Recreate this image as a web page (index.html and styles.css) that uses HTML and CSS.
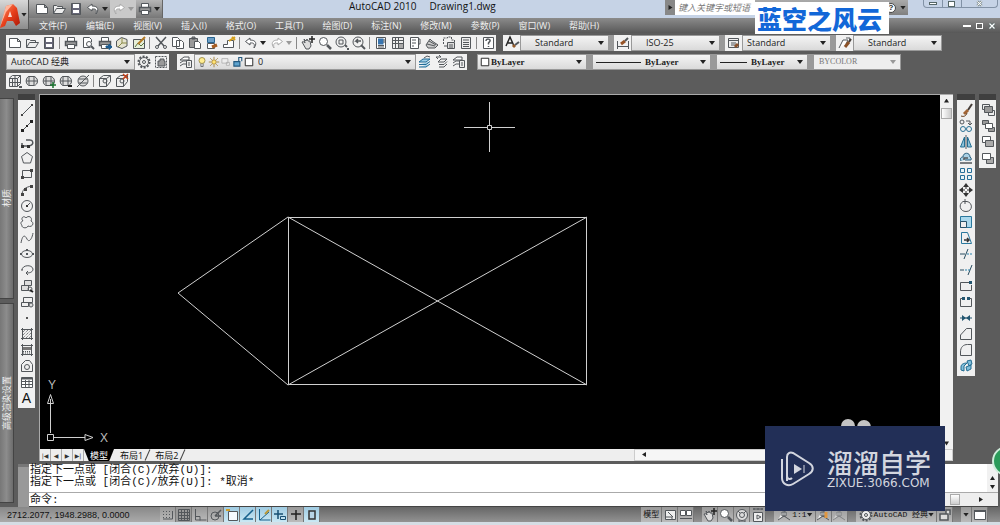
FILE: index.html
```
<!DOCTYPE html>
<html lang="zh-CN">
<head>
<meta charset="utf-8">
<title>AutoCAD 2010 - Drawing1.dwg</title>
<link rel="stylesheet" href="styles.css">
</head>
<body>
<svg class="sprite" aria-hidden="true">
  <defs>
    <linearGradient id="red" x2="1" y2="1"><stop stop-color="#ff9a70"/><stop offset=".5" stop-color="#e8401c"/><stop offset="1" stop-color="#a81505"/></linearGradient>
    <symbol id="new" viewBox="0 0 16 16"><path fill="#fff" d="M2.500 3.500h8l3 3v6h-11zM10.500 3.500v3h3"/></symbol>
    <symbol id="open" viewBox="0 0 16 16"><path fill="#eee" d="M2.500 12.500v-8h3l1 1h5v2M2.500 12.500l3-5h9l-3 5z"/></symbol>
    <symbol id="save" viewBox="0 0 16 16"><path fill="#667" d="M3.500 2.500h9v11h-9z"/><path fill="#fff" stroke="none" d="M5 3h6v4H5zM5 9h6v3H5z"/></symbol>
    <symbol id="undo" viewBox="0 0 16 16"><path fill="#fff" d="M7 3 2.500 6.500 7 10V8c4-.5 5 1 4 5 3-4 2.500-8-4-8z"/></symbol>
    <symbol id="redo" viewBox="0 0 16 16"><path fill="#fff" stroke="#aaa" d="M9 3l4.500 3.500L9 10V8C5 7.500 4 9 5 13 2 9 2.500 5 9 5z"/></symbol>
    <symbol id="print" viewBox="0 0 16 16"><path fill="#fff" d="M4.500 6V2.500h7V6"/><path fill="#999" stroke-width="1.500" d="M2.500 6.500h11v4h-11z"/><path fill="#fff" d="M4.500 9.500h7v4h-7z"/></symbol>
    <symbol id="preview" viewBox="0 0 16 16"><path fill="#fff" d="M10.500 12.500h-7v-10h6l2 2V7"/><circle cx="9" cy="9" r="2.500" fill="#fff"/><path stroke-width="2" d="m11 11 3 3"/></symbol>
    <symbol id="publish" viewBox="0 0 16 16"><use href="#print"/><path stroke="#1d5c8f" fill="#1d5c8f" d="M9 11h3V9l3 3-3 2.500v-2H9z"/></symbol>
    <symbol id="dwf" viewBox="0 0 16 16"><path fill="#e6e4d0" d="m2.500 6 5-3.500 5.500 2v6.500l-5 2.500-5.500-2z"/><path stroke="#8b8b49" d="M8 3v5h5M8 8l-4 4"/></symbol>
    <symbol id="markup" viewBox="0 0 16 16"><path fill="#e7efd9" d="M2.500 4.500h11v9h-11z"/><path stroke="#58733d" d="m4 12 3-4 3 3 3-3"/><path stroke="#b37a25" stroke-width="2" d="m7 9 7-7"/></symbol>
    <symbol id="cut" viewBox="0 0 16 16"><path stroke-width="1.500" d="m3 2 8 9M13 2l-8 9"/><circle cx="4" cy="12" r="1.500"/><circle cx="12" cy="12" r="1.500"/></symbol>
    <symbol id="copyclip" viewBox="0 0 16 16"><path fill="#fff" d="M2.500 2.500h5l2 2v7h-7zM6.500 5.500h5l2 2v6h-7z"/></symbol>
    <symbol id="paste" viewBox="0 0 16 16"><path fill="#999" d="M2.500 3.500h8v9h-8zM5 2h3v2H5z"/><path fill="#fff" d="M7.500 6.500h4l2 2v5h-6z"/></symbol>
    <symbol id="match" viewBox="0 0 16 16"><path stroke="#28638f" fill="#6da0c7" d="M3.500 2.500h7v5h-7z"/><path fill="#fff" d="M3.500 8.500h7v5h-7z"/><path stroke="#a85d20" stroke-width="3" d="m8 12 5-2"/></symbol>
    <symbol id="blockedit" viewBox="0 0 16 16"><path fill="#fff" d="M2.500 9.500h4v-4h6v7h-10z"/><path stroke="#d4a01c" stroke-width="2" d="m8 6 6-4M11 2l3 3"/></symbol>
    <symbol id="pan" viewBox="0 0 16 16"><path fill="#ddd" d="M2 7c2-1 3 1 3 1l-1-4 2 2 1-2 1 2 2 0 1 5-2 3H6z"/><path stroke="#222" stroke-width="1.500" d="M12 1v7M9 4h6"/></symbol>
    <symbol id="zoom" viewBox="0 0 16 16"><circle cx="6.500" cy="6.500" r="4" fill="#fff"/><path stroke-width="2.500" d="m10 10 4 4"/></symbol>
    <symbol id="zoomwin" viewBox="0 0 16 16"><circle cx="7" cy="7" r="5"/><path d="M5 5h4v4H5z"/><path stroke-width="2" d="m11 10 2 2M13 14h2"/></symbol>
    <symbol id="zoomprev" viewBox="0 0 16 16"><circle cx="7" cy="7" r="5"/><path stroke-width="2" d="m10 10 4 4"/><path stroke-width="1.500" d="M10 6H5l2-2M5 6l2 2"/></symbol>
    <symbol id="props" viewBox="0 0 16 16"><path fill="#fff" d="M3.500 2.500h9v11h-9z"/><path stroke="#3874ae" stroke-width="3" d="M5 5h4v3H5"/><path d="M5 10.500h6M5 12h6M11 4v4"/></symbol>
    <symbol id="center" viewBox="0 0 16 16"><path fill="#eee" d="M2.500 2.500h11v11h-11zM5.500 3v10M8.500 3v6M3 5.500h10M3 8.500h5"/><path fill="#aaa" d="M8.500 8.500h5v5h-5z"/></symbol>
    <symbol id="palette" viewBox="0 0 16 16"><path fill="#fff" d="M3.500 2.500h8v11h-8zM11 4h2v5h-2M5 5h4M5 8h4M5 11h2"/></symbol>
    <symbol id="sheet" viewBox="0 0 16 16"><path fill="#ccc" d="m2 10 4-6 2 2 6 4-3 3H4zM3 9l8 2M5 6l7 4"/></symbol>
    <symbol id="markset" viewBox="0 0 16 16"><path stroke-dasharray="2 1" d="M2.500 9V3h4V2h4v3h3v4"/><path fill="#ddd" d="M6.500 7.500h7v6h-7zM8 10h4M8 12h4M3 11h3"/></symbol>
    <symbol id="calc" viewBox="0 0 16 16"><path fill="#eee" d="M3.500 2.500h9v11h-9zM5 5h6M5 7.500h6M5 9.500h6M5 11.500h6"/></symbol>
    <symbol id="help" viewBox="0 0 16 16"><path fill="#fff" d="M3.500 2.500h10v11h-10z"/><path stroke-width="1.500" d="M6 6c0-3 5-2 4 0L8.500 8v1.500M8.500 11v1"/></symbol>
    <symbol id="brush" viewBox="0 0 16 16"><path stroke="#a26434" stroke-width="3" d="m6 12 4-4"/><path stroke="#443c38" stroke-width="2" d="m10 8 4-6"/><path stroke="#684020" d="M3 14c3 1 5 0 6-3"/></symbol>
    <symbol id="mleader" viewBox="0 0 16 16"><path fill="#fff" d="m2 13 4-8h5l-2 4M9 3h4l-1 4"/><path stroke="#8a5128" stroke-width="3" d="m8 12 4-5"/><path stroke="#443c38" stroke-width="2" d="m12 7 2-3"/></symbol>
    <symbol id="textstyle" viewBox="0 0 16 16"><path stroke="#222" stroke-width="1.500" d="m2 11 4-9 4 9M4 8h4"/><path stroke="#945a28" stroke-width="3" d="m9 12 2-2"/><path stroke-width="2" d="m11 10 4-3"/></symbol>
    <symbol id="dimstyle" viewBox="0 0 16 16"><path d="M2.500 6v8M13.500 6v8M3 11.500h10"/><path stroke="#975326" stroke-width="3" d="m6 9 4-3"/><path stroke-width="2" d="m10 6 3-3"/></symbol>
    <symbol id="tablestyle" viewBox="0 0 16 16"><path fill="#eee" d="M2.500 3.500h10v9h-10zM3 5.500h9M5 8h5M5 10h5"/><path stroke="#89512b" stroke-width="3" d="m9 12 3-3"/></symbol>
    <symbol id="gear" viewBox="0 0 16 16"><circle cx="8" cy="8" r="5.500" stroke-width="2" stroke-dasharray="2 1.400"/><circle cx="8" cy="8" r="4.500" fill="#eee"/><circle cx="8" cy="8" r="1.500"/></symbol>
    <symbol id="wssave" viewBox="0 0 16 16"><path stroke-dasharray="2 1" d="M2.500 2.500h11v11h-11z"/><path fill="#999" d="M5 7h2V5h4v2h1v5H5z"/></symbol>
    <symbol id="layers" viewBox="0 0 16 16"><path fill="#fff" d="m2 6 4-3h5v3H5zM2 9l3-2h5M2 12l3-2h3"/><path fill="#eee" d="M8.500 6.500h5v7h-5zM10 9h2M10 11h2"/></symbol>
    <symbol id="laycur" viewBox="0 0 16 16"><path stroke="#216b96" fill="#9fcfe8" d="m2 8 4-3h7l-4 3zM2 10.500h7l4-3M2 13h7l4-3"/><path d="m7 4 3-2 3 1"/></symbol>
    <symbol id="layprev" viewBox="0 0 16 16"><path d="m4 8 3-3h6l-3 3zM5 10.500h5l3-3M5 13h5l3-3M2 3h5L5 1M2 3l2 2"/></symbol>
    <symbol id="bulb" viewBox="0 0 16 16"><circle cx="8" cy="6" r="4" fill="#ffed91" stroke="#8b7933"/><path d="M6.500 10v4h3v-4"/></symbol>
    <symbol id="sun" viewBox="0 0 16 16"><circle cx="8" cy="8" r="3" fill="#ffe475" stroke="#97701f"/><path stroke="#97701f" d="M8 1v3M8 12v3M1 8h3M12 8h3M3 3l2 2M11 11l2 2M13 3l-2 2M5 11l-2 2"/></symbol>
    <symbol id="vp" viewBox="0 0 16 16"><path stroke="#aaa" fill="#eee" d="M2.500 3.500h8v6h-8zM8.500 8.500h4v4h-4z"/></symbol>
    <symbol id="lock" viewBox="0 0 16 16"><path stroke="#245a80" fill="#5fa4cf" stroke-width="1.500" d="M2.500 7.500h8v6h-8z"/><path stroke="#245a80" stroke-width="1.500" d="M9 7V2h4v5"/></symbol>
    <symbol id="box" viewBox="0 0 16 16"><path fill="#fff" stroke="#222" stroke-width="1.500" d="M2 2h12v12H2z"/></symbol>
    <symbol id="meshbox" viewBox="0 0 16 16"><path d="m2.500 5 3-2.500h8v8l-3 3h-8zM2.500 5.500h8v8M10.500 5.500l3-3M5.500 5v8M8 3v10M3 9.500h10"/><path stroke-width="2" d="M12 14h3"/></symbol>
    <symbol id="mesh" viewBox="0 0 16 16"><path fill="#ddd" d="M4.500 3.500h6c5 3 3 8 0 9h-6c-4-3-2-8 0-9zM2 8h12M5 3v9M10 3v9"/></symbol>
    <symbol id="meshadd" viewBox="0 0 16 16"><use href="#mesh"/><path stroke="#17702d" stroke-width="1.500" d="M12 9v6M9 12h6"/></symbol>
    <symbol id="meshsub" viewBox="0 0 16 16"><use href="#mesh"/><path stroke="#222" stroke-width="2" d="M10 13h4"/></symbol>
    <symbol id="meshno" viewBox="0 0 16 16"><circle cx="8" cy="8" r="5" fill="#ddd"/><path d="M2 14 14 2M4 6h8M4 10h8"/></symbol>
    <symbol id="cube" viewBox="0 0 16 16"><path fill="#eee" d="m2.500 5.500 4-3h7v6l-4 5h-7zM2.500 5.500h7v8M9.500 5.500l4-3"/><circle cx="8" cy="8" r="2"/></symbol>
    <symbol id="cubex" viewBox="0 0 16 16"><use href="#cube"/><path stroke="#c2401a" stroke-width="1.500" d="m9 1 5 5M14 1 9 6"/></symbol>
    <symbol id="line" viewBox="0 0 16 16"><path d="m3 13 10-10"/><path fill="#444" stroke="none" d="M2 12h2v2H2zM12 2h2v2h-2z"/></symbol>
    <symbol id="xline" viewBox="0 0 16 16"><path d="m2 14 12-12"/><path fill="#222" stroke="none" d="M2 11h3v3H2zM7 7h2v2H7zM11 2h3v3h-3z"/></symbol>
    <symbol id="pline" viewBox="0 0 16 16"><path stroke-width="1.500" d="M3 12h7c6-1 4-7 0-6H7M3 12V9"/><path fill="#333" stroke="none" d="M2 11h3v3H2zM8 11h3v3H8z"/></symbol>
    <symbol id="polygon" viewBox="0 0 16 16"><path d="m8 2.500 5.500 4-2 6.500h-7l-2-6.500z"/></symbol>
    <symbol id="rect" viewBox="0 0 16 16"><path d="M3.500 4.500h9v7h-9z"/><path fill="#444" stroke="none" d="M2 10h3v3H2zM11 3h3v3h-3z"/></symbol>
    <symbol id="arc" viewBox="0 0 16 16"><path d="M3 13c0-5 3-8 10-9"/><path fill="#444" stroke="none" d="M2 11h3v3H2zM11 3h3v3h-3zM5 6h3v3H5z"/></symbol>
    <symbol id="circle" viewBox="0 0 16 16"><circle cx="8" cy="8" r="5.500"/><path d="m8 8 3-3"/><path fill="#333" stroke="none" d="M7 7h2v2H7z"/></symbol>
    <symbol id="cloud" viewBox="0 0 16 16"><path d="M4 7C1 4 5 1 7 4c2-3 7-1 5 3 4 2 1 7-3 5-1 3-7 2-6-1-2-1-1-4 1-4z"/></symbol>
    <symbol id="spline" viewBox="0 0 16 16"><path d="M2 13C4 2 7 7 8 9c2 4 5 0 6-6"/></symbol>
    <symbol id="ellipse" viewBox="0 0 16 16"><ellipse cx="8" cy="8" rx="5.500" ry="3.500"/><path stroke-width="2" d="M1 8h2M13 8h2M7 8h2M7 4h2"/></symbol>
    <symbol id="earc" viewBox="0 0 16 16"><path d="M3 8c0-5 10-6 11-1 0 3-3 4-6 4M3 7v2M9 9l-2 2 2 2"/></symbol>
    <symbol id="insert" viewBox="0 0 16 16"><path fill="#ddd" d="M5.500 2.500h7v5h-7zM2.500 7.500h7v5h-7z"/><circle cx="11" cy="11" r="2"/><path stroke="#222" stroke-width="2" d="m11 12 3 2"/></symbol>
    <symbol id="block" viewBox="0 0 16 16"><path d="M4.500 3.500h9v5h-9zM2.500 8.500h7v4h-7z"/><circle cx="12" cy="11" r="2" fill="#ddd"/></symbol>
    <symbol id="point" viewBox="0 0 16 16"><path fill="#555" stroke="none" d="M7 7h2v2H7z"/></symbol>
    <symbol id="hatch" viewBox="0 0 16 16"><path d="M3.500 2v12M12.500 2v12M2 3.500h12M2 12.500h12"/><path stroke-dasharray="1 1" d="m4 6 2-2M4 9l5-5M4 12l8-8M7 12l5-5M10 12l2-2"/></symbol>
    <symbol id="grad" viewBox="0 0 16 16"><path d="M3.500 2v12M12.500 2v12M2 3.500h12M2 12.500h12"/><path fill="#777" stroke="none" d="M4 5h8v3H4z"/><path stroke-dasharray="1 1" d="M4 9.500h8M4 11h8"/></symbol>
    <symbol id="region" viewBox="0 0 16 16"><path d="M2.500 13.500v-7l4-4h4l3 4v7z"/><circle cx="8" cy="9" r="2.500"/></symbol>
    <symbol id="table" viewBox="0 0 16 16"><path fill="#fff" d="M2.500 3.500h11v10h-11zM3 7.500h10M3 10.500h10M6.500 6v7M10 6v7"/><path stroke-width="2" d="M3 4.500h10"/></symbol>
    <symbol id="copy" viewBox="0 0 16 16"><circle cx="4" cy="4" r="2"/><circle cx="5" cy="11" r="2.500" stroke="#2b7296"/><circle cx="11" cy="11" r="2.500" stroke="#2b7296"/><path d="M8 3h4v4M10 5l2 2 2-2"/></symbol>
    <symbol id="mirror" viewBox="0 0 16 16"><path stroke="#246f93" fill="#8cc1d9" d="M6.500 3v10h-4zM9.500 3v10h4z"/><path d="M8 1v14"/></symbol>
    <symbol id="offset" viewBox="0 0 16 16"><path stroke="#235a7a" fill="#a9d0e4" d="M3 11C1 7 5 7 5 7c0-5 7-5 7 0 2 1 1 3 1 3H7"/><path stroke-width="1.500" d="M2 13h12M6 10V8h4"/></symbol>
    <symbol id="array" viewBox="0 0 16 16"><path stroke="#276e98" fill="#e8f4f8" d="M2.500 2.500h4v4h-4zM9.500 2.500h4v4h-4zM2.500 9.500h4v4h-4zM9.500 9.500h4v4h-4z"/></symbol>
    <symbol id="move" viewBox="0 0 16 16"><path stroke="#333" d="M8 3v10M3 8h10"/><path stroke="none" fill="#333" d="m8 1 3 4H5zM8 15l3-4H5zM1 8l4-3v6zM15 8l-4-3v6z"/><path stroke="none" fill="#fff" d="M7 7h2v2H7z"/></symbol>
    <symbol id="rotate" viewBox="0 0 16 16"><path d="M5 3.500c-5 3-3 10 3 10 7 0 7-9 1-10H5M7 1v5"/></symbol>
    <symbol id="scale" viewBox="0 0 16 16"><path stroke="#2a789d" fill="#a9d8ed" d="M2.500 2.500h11v11h-11z"/><path fill="#eee" stroke="#28536b" d="M2.500 7.500h6v6h-6z"/></symbol>
    <symbol id="stretch" viewBox="0 0 16 16"><path stroke="#2a789d" d="M3.500 13.500v-11h6l4 11z"/><path stroke="#333" stroke-width="1.500" d="M6 10h5M9 8l2 2-2 2"/></symbol>
    <symbol id="trim" viewBox="0 0 16 16"><path stroke="#294d60" d="M6 13 10 3M2 8h5"/><path stroke="#2b83ac" stroke-dasharray="2 1" d="M9 8h5"/></symbol>
    <symbol id="extend" viewBox="0 0 16 16"><path stroke="#294d60" d="m10 13 4-10M2 8h4"/><path stroke="#2b83ac" stroke-dasharray="2 1" d="M7 8h5"/></symbol>
    <symbol id="breakpt" viewBox="0 0 16 16"><path d="M12 4.500H2.500v8h11V7"/><path fill="#235670" stroke="none" d="M11 3h3v3h-3z"/></symbol>
    <symbol id="break" viewBox="0 0 16 16"><path d="M5 4.500H2.500v8h11v-8H11"/><path fill="#235670" stroke="none" d="M4 3h3v3H4zM9 3h3v3H9z"/></symbol>
    <symbol id="join" viewBox="0 0 16 16"><path stroke="#235670" d="M2 8h12"/><path fill="#235670" stroke="none" d="m4 5 4 3-4 3zM12 5 8 8l4 3z"/></symbol>
    <symbol id="chamfer" viewBox="0 0 16 16"><path d="m2.500 9 6-6.500h5v11h-11z"/></symbol>
    <symbol id="fillet" viewBox="0 0 16 16"><path d="M2.500 13.500V10c0-5 3-7.500 7-7.500h4v11z"/></symbol>
    <symbol id="explode" viewBox="0 0 16 16"><path stroke="#236c91" fill="#81bfdb" d="M3 9c0-3 3-4 6-4L6 8v5l-3-1zM9 3l4-1 1 4-3 2zM8 9l5-2v4l-4 2z"/></symbol>
    <symbol id="ord1" viewBox="0 0 16 16"><path fill="#eee" d="M2.500 2.500h7v5h-7zM8.500 8.500h6v5h-6z"/><path fill="#999" d="M4.500 4.500h8v6h-8z"/></symbol>
    <symbol id="ord2" viewBox="0 0 16 16"><path fill="#999" d="M2.500 2.500h6v4h-6zM8.500 9.500h6v4h-6z"/><path fill="#fff" d="M5.500 5.500h7v5h-7z"/></symbol>
    <symbol id="ord3" viewBox="0 0 16 16"><path fill="#fff" d="M2.500 2.500h8v6h-8z"/><path fill="#aaa" d="M5.500 6.500h8v6h-8z"/></symbol>
    <symbol id="ord4" viewBox="0 0 16 16"><path fill="#aaa" d="M6.500 7.500h7v6h-7z"/><path fill="#fff" d="M2.500 3.500h8v6h-8z"/></symbol>
    <symbol id="snap" viewBox="0 0 16 16"><path stroke-dasharray="1 2" d="M3 4.500h7M3 7.500h7M3 10.500h7"/><path d="M12.500 4v8H3"/></symbol>
    <symbol id="grid" viewBox="0 0 16 16"><path d="M2.500 2.500h11v11h-11zM5.500 3v10M8.500 3v10M11.500 3v10M3 5.500h10M3 8.500h10M3 11.500h10"/></symbol>
    <symbol id="ortho" viewBox="0 0 16 16"><path d="M3.500 2v11h11M4 9.500h4v4"/></symbol>
    <symbol id="polar" viewBox="0 0 16 16"><circle cx="7" cy="9" r="4"/><path stroke-width="1.500" d="m7 9 6-6M7 9h6"/></symbol>
    <symbol id="osnap" viewBox="0 0 16 16"><path fill="#f5faff" d="M4.500 4.500h9v9h-9z"/><path stroke="#d3a12a" stroke-width="2" d="M2 3h4"/></symbol>
    <symbol id="otrack" viewBox="0 0 16 16"><path stroke="#17618c" stroke-width="1.500" d="M13 3 4 12h9"/></symbol>
    <symbol id="ducs" viewBox="0 0 16 16"><path stroke="#17618c" d="M3.500 2v11h11M4 13l9-8"/><path stroke="#b99838" stroke-width="2" d="m9 7 4-4"/></symbol>
    <symbol id="dyn" viewBox="0 0 16 16"><path stroke="#174f72" stroke-width="1.500" d="M6 3v9M2 7h9"/><path stroke="#174f72" d="M8.500 9.500h5v3h-5z"/></symbol>
    <symbol id="lwt" viewBox="0 0 16 16"><path stroke="#222" stroke-width="1.500" d="M8 3v10M3 7h10"/></symbol>
    <symbol id="qp" viewBox="0 0 16 16"><path stroke="#333" stroke-width="1.500" fill="#b7d4e5" d="M5 4h6v8H5z"/></symbol>
    <symbol id="layout" viewBox="0 0 16 16"><path fill="#eee" d="M3.500 3.500h10v9h-10zM3 10h7v3M6 5l5 5"/></symbol>
    <symbol id="views" viewBox="0 0 16 16"><path fill="#fff" d="M2.500 3.500h5v5h-5zM8.500 3.500h5v5h-5zM2 11.500h12"/></symbol>
    <symbol id="wheel" viewBox="0 0 16 16"><circle cx="8" cy="8" r="5.500" fill="#ddd"/><circle cx="8" cy="8" r="2.500"/><path d="M5 13v2h6v-2M4 4l2 2M12 4l-2 2"/></symbol>
    <symbol id="motion" viewBox="0 0 16 16"><path fill="#eee" d="M3.500 5.500h9v9h-9zM3 2h10M4 1v2M8 1v2M12 1v2M7 8l4 2-4 2z"/></symbol>
    <symbol id="anno" viewBox="0 0 16 16"><path fill="#eee" d="M8 2v7L2 13M8 9l6 4M6 5h4v4H6z"/></symbol>
    <symbol id="annovis" viewBox="0 0 16 16"><use href="#anno"/><path stroke="#df9640" stroke-width="3" d="M11 5v6"/></symbol>
    <symbol id="padlock" viewBox="0 0 16 16"><path fill="#ddd" stroke-width="1.500" d="M3 7h8v6H3zM9 7V3h4v5"/></symbol>
    <symbol id="clean" viewBox="0 0 16 16"><path fill="#fff" d="M2.500 3.500h11v9h-11z"/><path stroke-width="2" d="M2 4h12"/></symbol>
    <symbol id="close" viewBox="0 0 16 16"><path stroke="#566" stroke-width="5" d="m3 3 10 10M13 3 3 13"/><path stroke="#fff" stroke-width="2.500" d="m3 3 10 10M13 3 3 13"/></symbol>
  </defs>
</svg>

<header class="head">
  <button class="app" aria-label="应用程序菜单">
    <svg class="app-logo" viewBox="0 0 20 26"><path fill="url(#red)" stroke="none" d="M6 4l7-2 4 4 3 15-4 3-3-5H7l-2 5-5 2z"/><path fill="#ffb79e" stroke="none" d="M6 4l7-2-7 8-6 15z"/><path fill="#f8d9cf" stroke="none" d="m10 9 2 6H8z"/></svg>
    <i class="arrow"></i>
  </button>
  <div class="title">
    <div class="qat">
      <button class="t" aria-label="新建"><svg><use href="#new"/></svg></button>
      <button class="t" aria-label="打开"><svg><use href="#open"/></svg></button>
      <button class="t" aria-label="保存"><svg><use href="#save"/></svg></button>
      <button class="t" aria-label="放弃"><svg><use href="#undo"/></svg></button><i class="arrow gap"></i>
      <span class="off"><button class="t" aria-label="重做"><svg><use href="#redo"/></svg></button><i class="arrow dim gap"></i></span>
      <button class="t" aria-label="打印"><svg><use href="#print"/></svg></button><i class="arrow gap"></i>
    </div>
    <h1 class="caption"><span>AutoCAD 2010</span><span>Drawing1.dwg</span></h1>
    <div class="info">
      <button class="info-btn" aria-label="展开搜索"><i class="tri right"></i></button>
      <input class="search" type="text" aria-label="搜索" placeholder="键入关键字或短语">
      <button class="info-help" aria-label="帮助"><span>?</span><i class="arrow"></i></button>
    </div>
    <div class="win">
      <button aria-label="最小化"><i class="w-min"></i></button><button aria-label="最大化"><i class="w-max"></i></button><button class="w-close" aria-label="关闭"><svg><use href="#close"/></svg></button>
    </div>
  </div>
  <nav class="menu">
    <a href="#">文件(F)</a><a href="#">编辑(E)</a><a href="#">视图(V)</a><a href="#">插入(I)</a><a href="#">格式(O)</a><a href="#">工具(T)</a><a href="#">绘图(D)</a><a href="#">标注(N)</a><a href="#">修改(M)</a><a href="#">参数(P)</a><a href="#">窗口(W)</a><a href="#">帮助(H)</a>
    <span class="doc-win"><button aria-label="最小化文档"><i class="w-min"></i></button><button aria-label="还原文档"><i class="w-max"></i></button><button aria-label="关闭文档"><svg><use href="#close"/></svg></button></span>
  </nav>
  <div class="badge">蓝空之风云</div>
</header>

<section class="bars">
  <div class="bar">
    <div class="panel">
      <button class="t" aria-label="新建"><svg><use href="#new"/></svg></button>
      <button class="t" aria-label="打开"><svg><use href="#open"/></svg></button>
      <button class="t" aria-label="保存"><svg><use href="#save"/></svg></button><i class="sep"></i>
      <button class="t" aria-label="打印"><svg><use href="#print"/></svg></button>
      <button class="t" aria-label="打印预览"><svg><use href="#preview"/></svg></button>
      <button class="t" aria-label="发布"><svg><use href="#publish"/></svg></button>
      <button class="t" aria-label="三维 DWF"><svg><use href="#dwf"/></svg></button>
      <button class="t" aria-label="标记"><svg><use href="#markup"/></svg></button><i class="sep"></i>
      <button class="t" aria-label="剪切"><svg><use href="#cut"/></svg></button>
      <button class="t" aria-label="复制"><svg><use href="#copyclip"/></svg></button>
      <button class="t" aria-label="粘贴"><svg><use href="#paste"/></svg></button>
      <button class="t" aria-label="特性匹配"><svg><use href="#match"/></svg></button>
      <button class="t" aria-label="块编辑器"><svg><use href="#blockedit"/></svg></button><i class="sep"></i>
      <button class="t" aria-label="放弃"><svg><use href="#undo"/></svg></button><i class="arrow gap"></i>
      <button class="t" aria-label="重做"><svg><use href="#redo"/></svg></button><i class="arrow dim gap"></i><i class="sep"></i>
      <button class="t" aria-label="平移"><svg><use href="#pan"/></svg></button>
      <button class="t" aria-label="缩放"><svg><use href="#zoom"/></svg></button>
      <button class="t" aria-label="窗口缩放"><svg><use href="#zoomwin"/></svg></button>
      <button class="t" aria-label="缩放上一个"><svg><use href="#zoomprev"/></svg></button><i class="sep"></i>
      <button class="t" aria-label="特性"><svg><use href="#props"/></svg></button>
      <button class="t" aria-label="设计中心"><svg><use href="#center"/></svg></button>
      <button class="t" aria-label="工具选项板"><svg><use href="#palette"/></svg></button>
      <button class="t" aria-label="图纸集"><svg><use href="#sheet"/></svg></button>
      <button class="t" aria-label="标记集"><svg><use href="#markset"/></svg></button>
      <button class="t" aria-label="计算器"><svg><use href="#calc"/></svg></button><i class="sep"></i>
      <button class="t" aria-label="帮助"><svg><use href="#help"/></svg></button>
    </div>
    <div class="group styles">
      <div class="panel"><button class="t" aria-label="文字样式"><svg><use href="#textstyle"/></svg></button><span class="combo"><select class="indent" aria-label="文字样式列表"><option>Standard</option></select></span></div>
      <div class="panel"><button class="t" aria-label="标注样式"><svg><use href="#dimstyle"/></svg></button><span class="combo"><select class="indent" aria-label="标注样式列表"><option>ISO-25</option></select></span></div>
      <div class="panel"><button class="t" aria-label="表格样式"><svg><use href="#tablestyle"/></svg></button><span class="combo"><select aria-label="表格样式列表"><option>Standard</option></select></span></div>
      <div class="panel"><button class="t" aria-label="多重引线样式"><svg><use href="#mleader"/></svg></button><span class="combo"><select class="indent" aria-label="多重引线样式列表"><option>Standard</option></select></span></div>
    </div>
  </div>
  <div class="bar">
    <div class="panel">
      <span class="combo ws"><select aria-label="工作空间"><option>AutoCAD 经典</option></select></span>
      <button class="t" aria-label="工作空间设置"><svg><use href="#gear"/></svg></button>
      <button class="t" aria-label="我的工作空间"><svg><use href="#wssave"/></svg></button>
    </div>
    <div class="panel layer-panel">
      <button class="t" aria-label="图层特性管理器"><svg><use href="#layers"/></svg></button>
      <span class="combo layer"><svg><use href="#bulb"/></svg><svg><use href="#sun"/></svg><svg><use href="#vp"/></svg><svg><use href="#lock"/></svg><svg class="swatch"><use href="#box"/></svg><select aria-label="图层"><option>0</option></select></span>
      <button class="t" aria-label="置为当前"><svg><use href="#laycur"/></svg></button>
      <button class="t" aria-label="上一个图层"><svg><use href="#layprev"/></svg></button>
      <button class="t" aria-label="图层状态"><svg><use href="#layers"/></svg></button>
    </div>
    <div class="group props">
      <span class="combo serif color"><svg class="swatch"><use href="#box"/></svg><select aria-label="颜色"><option>ByLayer</option></select></span>
      <span class="combo serif ltype"><i class="rule"></i><select aria-label="线型"><option>ByLayer</option></select></span>
      <span class="combo serif lweight"><i class="rule"></i><select aria-label="线宽"><option>ByLayer</option></select></span>
      <span class="combo serif plot"><select aria-label="打印样式" disabled><option>BYCOLOR</option></select></span>
    </div>
  </div>
  <div class="bar">
    <div class="panel">
      <button class="t" aria-label="网格长方体"><svg><use href="#meshbox"/></svg></button>
      <button class="t" aria-label="平滑对象"><svg><use href="#mesh"/></svg></button>
      <button class="t" aria-label="提高平滑度"><svg><use href="#meshadd"/></svg></button>
      <button class="t" aria-label="降低平滑度"><svg><use href="#meshsub"/></svg></button>
      <button class="t" aria-label="优化网格"><svg><use href="#meshno"/></svg></button><i class="sep"></i>
      <button class="t" aria-label="增加锐化"><svg><use href="#cube"/></svg></button>
      <button class="t" aria-label="删除锐化"><svg><use href="#cubex"/></svg></button>
    </div>
  </div>
</section>

<main class="work">
  <aside class="palettes"><div><span>材质</span></div><div><span>高级渲染设置</span></div></aside>
  <div class="stage">
    <div class="upper">
      <div class="tools">
        <button class="t" aria-label="直线"><svg><use href="#line"/></svg></button>
        <button class="t" aria-label="构造线"><svg><use href="#xline"/></svg></button>
        <button class="t" aria-label="多段线"><svg><use href="#pline"/></svg></button>
        <button class="t" aria-label="多边形"><svg><use href="#polygon"/></svg></button>
        <button class="t" aria-label="矩形"><svg><use href="#rect"/></svg></button>
        <button class="t" aria-label="圆弧"><svg><use href="#arc"/></svg></button>
        <button class="t" aria-label="圆"><svg><use href="#circle"/></svg></button>
        <button class="t" aria-label="修订云线"><svg><use href="#cloud"/></svg></button>
        <button class="t" aria-label="样条曲线"><svg><use href="#spline"/></svg></button>
        <button class="t" aria-label="椭圆"><svg><use href="#ellipse"/></svg></button>
        <button class="t" aria-label="椭圆弧"><svg><use href="#earc"/></svg></button>
        <button class="t" aria-label="插入块"><svg><use href="#insert"/></svg></button>
        <button class="t" aria-label="创建块"><svg><use href="#block"/></svg></button>
        <button class="t" aria-label="点"><svg><use href="#point"/></svg></button>
        <button class="t" aria-label="图案填充"><svg><use href="#hatch"/></svg></button>
        <button class="t" aria-label="渐变色"><svg><use href="#grad"/></svg></button>
        <button class="t" aria-label="面域"><svg><use href="#region"/></svg></button>
        <button class="t" aria-label="表格"><svg><use href="#table"/></svg></button>
        <button class="t letter" aria-label="多行文字">A</button>
      </div>
      <div class="view">
        <div class="canvas-row">
          <svg class="canvas" role="img" aria-label="图形">
            <g class="draw">
              <path d="M248.500 122.500h298v167h-298zM248 122l299 168M547 122 248 290M248 122 138 198l110 92"/>
              <path d="M449.500 7v50M424 32.500h51"/><path class="knob" d="M447.500 30.500h4v4h-4z"/>
              <path d="M10.500 338v-34M14 342.500h31M7.500 339.500h6v6h-6zM7.500 308.500l3-9 3 9zM45 339.500l8 3-8 3z"/>
            </g>
            <circle cx="808" cy="331" r="7" class="blob"/><circle cx="824" cy="332" r="7" class="blob"/>
            <text x="8" y="294">Y</text><text x="60" y="347">X</text>
          </svg>
          <div class="vscroll"><button aria-label="向上滚动"><i class="tri up"></i></button><i class="thumb"></i><button class="end" aria-label="向下滚动"><i class="tri down"></i></button></div>
        </div>
        <div class="tabs">
          <div class="tabnav"><button aria-label="第一个">|◀</button><button aria-label="上一个">◀</button><button aria-label="下一个">▶</button><button aria-label="最后一个">▶|</button></div>
          <button class="tab on">模型</button><button class="tab">布局1</button><button class="tab">布局2</button>
          <div class="hscroll"><i class="tri left"></i></div>
        </div>
      </div>
      <div class="tools modify">
        <button class="t" aria-label="删除"><svg><use href="#brush"/></svg></button>
        <button class="t" aria-label="复制"><svg><use href="#copy"/></svg></button>
        <button class="t" aria-label="镜像"><svg><use href="#mirror"/></svg></button>
        <button class="t" aria-label="偏移"><svg><use href="#offset"/></svg></button>
        <button class="t" aria-label="阵列"><svg><use href="#array"/></svg></button>
        <button class="t" aria-label="移动"><svg><use href="#move"/></svg></button>
        <button class="t" aria-label="旋转"><svg><use href="#rotate"/></svg></button>
        <button class="t" aria-label="缩放"><svg><use href="#scale"/></svg></button>
        <button class="t" aria-label="拉伸"><svg><use href="#stretch"/></svg></button>
        <button class="t" aria-label="修剪"><svg><use href="#trim"/></svg></button>
        <button class="t" aria-label="延伸"><svg><use href="#extend"/></svg></button>
        <button class="t" aria-label="打断于点"><svg><use href="#breakpt"/></svg></button>
        <button class="t" aria-label="打断"><svg><use href="#break"/></svg></button>
        <button class="t" aria-label="合并"><svg><use href="#join"/></svg></button>
        <button class="t" aria-label="倒角"><svg><use href="#chamfer"/></svg></button>
        <button class="t" aria-label="圆角"><svg><use href="#fillet"/></svg></button>
        <button class="t" aria-label="分解"><svg><use href="#explode"/></svg></button>
      </div>
      <div class="tools order">
        <button class="t" aria-label="前置"><svg><use href="#ord1"/></svg></button>
        <button class="t" aria-label="后置"><svg><use href="#ord2"/></svg></button>
        <button class="t" aria-label="置于对象之上"><svg><use href="#ord3"/></svg></button>
        <button class="t" aria-label="置于对象之下"><svg><use href="#ord4"/></svg></button>
      </div>
    </div>
    <div class="command">
      <div class="cmd-grip"></div>
      <div class="cmd-main">
        <div class="history"><div class="lines"><p>指定下一点或 [闭合(C)/放弃(U)]:</p><p>指定下一点或 [闭合(C)/放弃(U)]: *取消*</p></div><div class="cmd-scroll"><i class="tri up"></i><i class="tri down"></i></div></div>
        <div class="prompt"><label for="cmd">命令:</label><input id="cmd" type="text"><div class="cmd-h"><i class="cmd-thumb"></i><i class="tri right"></i></div></div>
      </div>
    </div>
  </div>
</main>

<footer class="status">
  <output class="coords">2712.2077, 1948.2988, 0.0000</output>
  <button class="s" aria-label="捕捉"><svg><use href="#snap"/></svg></button>
  <button class="s dark" aria-label="栅格"><svg><use href="#grid"/></svg></button>
  <button class="s" aria-label="正交"><svg><use href="#ortho"/></svg></button>
  <button class="s" aria-label="极轴"><svg><use href="#polar"/></svg></button>
  <button class="s on" aria-label="对象捕捉"><svg><use href="#osnap"/></svg></button>
  <button class="s on" aria-label="对象追踪"><svg><use href="#otrack"/></svg></button>
  <button class="s on" aria-label="动态 UCS"><svg><use href="#ducs"/></svg></button>
  <button class="s on" aria-label="动态输入"><svg><use href="#dyn"/></svg></button>
  <button class="s" aria-label="线宽"><svg><use href="#lwt"/></svg></button>
  <button class="s on" aria-label="快捷特性"><svg><use href="#qp"/></svg></button>
  <div class="status-right">
    <div class="sg"><button class="s text">模型</button><button class="s" aria-label="快速查看布局"><svg><use href="#layout"/></svg></button><button class="s" aria-label="快速查看图形"><svg><use href="#views"/></svg></button></div>
    <div class="sg"><button class="s" aria-label="平移"><svg><use href="#pan"/></svg></button><button class="s" aria-label="缩放"><svg><use href="#zoom"/></svg></button><button class="s" aria-label="控制盘"><svg><use href="#wheel"/></svg></button><button class="s" aria-label="运动"><svg><use href="#motion"/></svg></button></div>
    <div class="sg"><button class="s text"><svg><use href="#anno"/></svg>1:1<i class="arrow"></i></button><button class="s" aria-label="注释可见性"><svg><use href="#annovis"/></svg></button><button class="s faint" aria-label="自动添加比例"><svg><use href="#anno"/></svg></button></div>
    <div class="sg"><button class="s text"><svg><use href="#gear"/></svg>AutoCAD 经典<i class="arrow"></i></button><button class="s" aria-label="锁定"><svg><use href="#padlock"/></svg></button></div>
    <div class="sg"><button class="s slim" aria-label="状态栏菜单"><i class="arrow"></i></button><button class="s" aria-label="全屏显示"><svg><use href="#clean"/></svg></button></div>
  </div>
</footer>

<div class="brand">
  <svg class="brand-logo" viewBox="0 0 36 38"><path d="M8 31V7c0-4 3-5 6-4l16 10c5 3 5 8 0 11L14 34c-5 3-11 0-11-6V9"/><path d="M8 7v19c0 3 3 4 5 2"/><path class="solid" d="m15 14 8 5-8 5z"/><path class="thin" d="M25 15v8"/></svg>
  <div><strong>溜溜自学</strong><span>ZIXUE.3066.COM</span></div>
</div>
<button class="bubble" aria-label="悬浮球"></button>
</body>
</html>
```

FILE: styles.css
```
* { box-sizing: border-box; }
body {
  margin: 0;
  min-height: 100vh;
  display: flex;
  flex-direction: column;
  position: relative;
  overflow: hidden;
  background: #5c5c5c;
  color: #222;
  font: 9px/12px "Open Sans", "Noto Sans CJK SC", sans-serif;
  border-bottom: 3px solid #d5dde4;
}
button, select, input { margin: 0; padding: 0; border: 0; background: none; font: inherit; color: inherit; }
i { font-style: normal; }
svg { fill: none; stroke: #53575b; stroke-width: 1; }
.sprite { position: absolute; width: 0; height: 0; }

.t { width: 17px; height: 16px; flex: none; display: flex; align-items: center; justify-content: center; }
.t svg, .s svg { width: 16px; height: 16px; flex: none; }
.arrow { display: block; flex: none; width: 6px; height: 4px; background: #222; clip-path: polygon(0 0, 100% 0, 50% 100%); }
.arrow.dim { background: #999; }
.arrow.gap { margin: 0 2px 0 1px; }
.tri { display: block; width: 5px; height: 5px; background: #222; }
.tri.up { clip-path: polygon(50% 0, 100% 80%, 0 80%); }
.tri.down { clip-path: polygon(0 20%, 100% 20%, 50% 100%); }
.tri.left { clip-path: polygon(80% 0, 80% 100%, 0 50%); }
.tri.right { clip-path: polygon(20% 0, 100% 50%, 20% 100%); }

/* title bar and menu */
.head { position: relative; display: grid; grid-template-columns: 29px 1fr; grid-template-rows: 18px 15px; background: #5c5c5c; }
.app { grid-row: 1 / 3; height: 30px; display: flex; align-items: center; gap: 1px; background: linear-gradient(#d8d8d8, #8c8c8c); border-right: 1px solid #555; border-bottom: 1px solid #555; }
.app-logo { width: 20px; height: 26px; }
.title { display: flex; align-items: stretch; background: #c6d3e6; min-width: 0; }
.qat { flex: none; display: flex; align-items: center; background: linear-gradient(#b5b5b5, #777); border-right: 1px solid #666; padding-left: 4px; }
.off { display: flex; align-items: center; height: 100%; background: #c9c9c9; }
.caption { flex: 1; margin: 0; padding-left: 186px; display: flex; gap: 13px; font: 10px/13px "Open Sans", sans-serif; color: #111; white-space: nowrap; }
.info { flex: none; display: flex; height: 15px; }
.info-btn { width: 10px; background: #888; display: flex; align-items: center; justify-content: center; }
.search { width: 80px; background: #fff; padding-left: 3px; font-style: italic; }
.search::placeholder { color: #777; opacity: 1; }
.info-help { width: 153px; background: linear-gradient(#aaa, #808080); display: flex; align-items: center; justify-content: flex-end; gap: 4px; padding-right: 2px; }
.info-help span { width: 10px; height: 10px; border-radius: 5px; background: #fff; border: 1px solid #444; font: bold 8px/8px "Liberation Sans", sans-serif; text-align: center; }
.win { flex: none; display: flex; height: 8px; margin: 0 2px 0 15px; border: 1px solid #8292a6; border-top: 0; border-radius: 0 0 4px 4px; width: 75px; }
.win button, .doc-win button { display: flex; align-items: center; justify-content: center; }
.win button { flex: 1; border-right: 1px solid #8292a6; }
.win .w-close { flex: 2; border: 0; }
.win svg { width: 7px; height: 7px; }
.w-min { width: 8px; height: 3px; border: 1px solid #566; background: #fff; }
.w-max { width: 7px; height: 6px; border: 1px solid #566; background: #fff; }
.menu { display: flex; align-items: center; gap: 19px; padding-left: 10px; background: linear-gradient(#8b8b8b, #585858); }
.menu a { color: #eee; text-decoration: none; white-space: nowrap; }
.doc-win { margin-left: auto; margin-right: 4px; display: flex; gap: 5px; }
.doc-win .w-min { background: #fff; border: 0; height: 2px; }
.doc-win .w-max { background: #666; border-color: #fff; }
.doc-win svg { width: 8px; height: 8px; }
.badge { position: absolute; top: 2px; right: 111px; padding: 0 7px 0 2px; background: #fff; color: #1267d8; font: 900 25px/32px "Noto Sans CJK SC", sans-serif; white-space: nowrap; }

/* toolbars */
.bars { display: flex; flex-direction: column; gap: 3px; padding: 2px 0 5px 6px; }
.bar { display: flex; height: 16px; }
.panel { flex: none; display: flex; align-items: center; background: #f1f1f1; }
.sep { flex: none; width: 1px; height: 12px; margin: 0 2px; background: #888; }
.group { display: flex; gap: 5px; background: #999; }
.styles { margin-left: 7px; }
.props { margin-left: 10px; }
.combo { position: relative; flex: none; display: flex; align-items: center; width: 89px; height: 16px; background: linear-gradient(#f4f4f4, #dadada); border: 1px solid #999; }
.combo::after { content: ""; position: absolute; right: 4px; top: 5px; width: 6px; height: 4px; background: #222; clip-path: polygon(0 0, 100% 0, 50% 100%); pointer-events: none; }
.combo select { appearance: none; flex: 1; min-width: 0; height: 14px; padding-left: 4px; }
.combo .indent { padding-left: 14px; }
.combo svg { flex: none; width: 12px; height: 12px; }
.combo .swatch { width: 10px; height: 10px; }
.ws { width: 129px; }
.layer-panel { margin-left: 8px; }
.layer { width: 222px; padding-left: 1px; }
.serif { font: bold 9px/12px "Liberation Serif", serif; }
.color { width: 110px; padding-left: 2px; }
.color select { padding-left: 1px; }
.ltype { width: 119px; }
.lweight { width: 92px; }
.rule { width: 45px; height: 1px; margin-left: 3px; background: #222; }
.lweight .rule { width: 27px; }
.plot { width: 88px; font-weight: normal; background: #eee; }
.plot select { padding-left: 5px; font-size: 8px; color: #777; opacity: 1; }
.plot::after { background: #999; }

/* work area */
.work { flex: 1; display: flex; min-height: 0; }
.palettes { flex: none; width: 16px; display: flex; flex-direction: column; gap: 4px; padding: 4px 2px 4px 0; }
.palettes div { flex: 1; display: flex; align-items: center; justify-content: center; background: linear-gradient(90deg, #777, #8c8c8c 50%, #6c6c6c); border: 1px solid #444; border-left: 0; }
.palettes span { writing-mode: vertical-rl; text-orientation: sideways; transform: rotate(180deg); color: #eee; }
.stage { flex: 1; min-width: 0; display: flex; flex-direction: column; padding-left: 2px; }
.upper { flex: 1; display: flex; align-items: flex-start; padding-right: 4px; min-height: 0; }
.tools { flex: none; width: 17px; padding: 2px 0; background: #f0f0f0; border-top: 6px solid #3f3f3f; }
.letter { font: 14px/16px "Liberation Sans", sans-serif; color: #111; }
.modify { width: 18px; margin: 0 4px; }
.view { flex: 1; align-self: stretch; min-width: 0; margin-left: 4px; display: flex; flex-direction: column; border-left: 1px solid #aaa; border-top: 1px solid #aaa; }
.canvas-row { flex: 1; display: flex; min-height: 0; }
.canvas { flex: 1; min-width: 0; height: auto; background: #000; }
.draw { stroke: #d0d0d0; }
.knob { fill: #000; }
.blob { fill: #c4c4c4; stroke: none; }
.canvas text { fill: #bbb; stroke: none; font: 12px "Liberation Sans", sans-serif; }
.vscroll { flex: none; width: 13px; display: flex; flex-direction: column; background: #f1f1f1; }
.vscroll button { height: 12px; padding: 0 4px; }
.vscroll .end { margin-top: auto; }
.thumb { width: 11px; height: 11px; margin: 1px; background: linear-gradient(90deg, #fff, #ccc); border: 1px solid #aaa; }
.tabs { flex: none; height: 12px; display: flex; background: #eee; line-height: 11px; }
.tabnav { display: flex; }
.tabnav button { width: 11px; border-right: 1px solid #aaa; font: 6px/11px "DejaVu Sans", sans-serif; color: #333; }
.tab { position: relative; height: 12px; padding: 0 6px; line-height: 11px; color: #111; }
.tab::after { content: ""; position: absolute; right: 1px; top: 0; width: 1px; height: 12px; background: #444; transform: rotate(24deg); }
.tab.on { background: #000; color: #fff; clip-path: polygon(0 0, 100% 0, 84% 100%, 16% 100%); }
.hscroll { width: 319px; margin-left: auto; background: #f6f6f6; border: 1px solid #ccc; padding: 2px 7px; }

/* command window */
.command { flex: none; display: flex; padding-top: 3px; background: #5c5c5c; }
.cmd-grip { width: 11px; background: #999; border-top: 3px solid #777; }
.cmd-main { flex: 1; min-width: 0; margin-right: 2px; background: #fff; font: 11px/12px "Liberation Mono", "Noto Sans CJK SC", monospace; color: #111; }
.history { display: flex; height: 29px; border-bottom: 1px solid #aaa; }
.lines { flex: 1; padding-left: 1px; }
.history p { margin: 0; white-space: pre; }
.cmd-scroll { width: 11px; display: flex; flex-direction: column; justify-content: space-between; align-items: center; padding: 12px 0 3px; background: #f1f1f1; }
.prompt { height: 14px; display: flex; align-items: center; padding-left: 1px; border-bottom: 1px solid #444; }
.prompt input { flex: 1; min-width: 0; height: 12px; outline: 0; }
.cmd-h { width: 60px; height: 13px; background: #eee; display: flex; align-items: center; gap: 18px; padding-left: 12px; }
.cmd-thumb { width: 10px; height: 11px; background: linear-gradient(#fff, #ccc); border: 1px solid #aaa; }

/* status bar */
.status { flex: none; display: flex; height: 15px; background: linear-gradient(#666, #929292); color: #111; }
.coords { flex: none; width: 160px; padding-left: 7px; font: 9px/17px "Liberation Sans", sans-serif; background: linear-gradient(#888, #aaa); }
.s { flex: none; width: 16px; height: 15px; display: flex; align-items: center; justify-content: center; overflow: hidden; background: linear-gradient(#999, #bbb); border-right: 1px solid #777; }
.s.on { background: linear-gradient(#9fcbe2, #cae8f4); }
.s.dark { background: #999; }
.s.text { width: auto; padding: 0 2px; font-family: "Liberation Mono", "Noto Sans CJK SC", monospace; font-size: 8px; }
.s.text:first-child:last-child { font-size: 9px; }
.s.slim { width: 11px; }
.s.faint svg { opacity: 0.5; }
.status-right { margin-left: auto; margin-right: 12px; display: flex; gap: 8px; }
.sg { display: flex; }

/* overlays */
.brand { position: absolute; right: 55px; bottom: 11px; width: 180px; height: 85px; padding-left: 14px; display: flex; align-items: center; gap: 12px; background: #222f57; color: #d3d6df; white-space: nowrap; }
.brand-logo { width: 36px; height: 38px; stroke: #d3d6df; stroke-width: 2; }
.brand-logo .solid { fill: #d3d6df; stroke: none; }
.brand-logo .thin { stroke-width: 1; }
.brand strong { display: block; font: 500 26px/28px "Noto Sans CJK SC", sans-serif; }
.brand span { display: block; margin-top: 1px; font: 12px/12px "DejaVu Sans", sans-serif; }
.bubble { position: absolute; right: -22px; bottom: 46px; width: 30px; height: 30px; border-radius: 15px; background: #2b9b5a; border: 2px solid #cfeedb; }
```
